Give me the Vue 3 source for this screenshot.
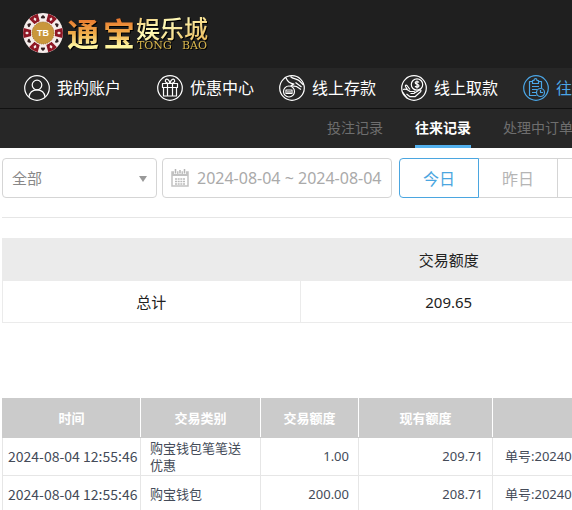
<script setup>
import { ref } from 'vue'

const menus = [
  { id: 'account', name: '我的账户' },
  { id: 'gift', name: '优惠中心' },
  { id: 'deposit', name: '线上存款' },
  { id: 'withdraw', name: '线上取款' },
  { id: 'history', name: '往来记录' },
]
const currentMenu = ref('history')

const tabs = ['投注记录', '往来记录', '处理中订单']
const currentTab = ref('往来记录')

const types = ['全部', '购宝钱包', '购宝钱包笔笔送优惠']
const selectedType = ref('全部')
const dateRange = ref('2024-08-04 ~ 2024-08-04')

const days = ['今日', '昨日', '近七日']
const currentDay = ref('今日')

const total = ref('209.65')
const records = ref([
  { time: '2024-08-04 12:55:46', type: '购宝钱包笔笔送优惠', amount: '1.00', balance: '209.71', note: '单号:20240804125546' },
  { time: '2024-08-04 12:55:46', type: '购宝钱包', amount: '200.00', balance: '208.71', note: '单号:20240804125546' },
])

const chipAngles = [0, 60, 120, 180, 240, 300]
</script>

<template>
  <div class="page">
    <header class="header">
      <svg class="logo" width="196" height="56" viewBox="0 0 196 56" role="img" aria-label="通宝娱乐城">
        <defs>
          <linearGradient id="gold" x1="0" y1="0" x2="0" y2="1">
            <stop offset="0.2" stop-color="#e8752c" />
            <stop offset="0.55" stop-color="#f0b04c" />
            <stop offset="0.8" stop-color="#fff5a0" />
          </linearGradient>
          <linearGradient id="pale" x1="0" y1="0" x2="1" y2="1">
            <stop offset="0" stop-color="#e8b055" />
            <stop offset="0.4" stop-color="#fffab8" />
            <stop offset="1" stop-color="#e9b04c" />
          </linearGradient>
        </defs>
        <circle cx="23" cy="27" r="20" fill="#f5ecea" />
        <g v-for="a in chipAngles" :key="a" :transform="`rotate(${a + 30} 23 27)`">
          <path d="M18 7.7a20 20 0 0 1 10 0l-2 7.600a12 12 0 0 0-6 0z" fill="#8e1624" />
          <path d="M23 9l1.500 2-1.500 2-1.500-2z" fill="#f5ecea" />
        </g>
        <g v-for="a in chipAngles" :key="'s' + a" :transform="`rotate(${a} 23 27)`">
          <path d="M23 9c3 2 2.500 4 0 3.200c-2.500.8-3-1.200 0-3.200z" fill="#332022" />
        </g>
        <circle cx="23" cy="27" r="12" fill="#f5ecea" />
        <circle cx="23" cy="27" r="11" fill="#c9973c" stroke="#9c6a25" stroke-dasharray="1 1" />
        <text x="23" y="30" class="chip-text">TB</text>
        <g class="logo-shadow">
          <text x="47" y="40" class="logo-big">通</text>
          <text x="83" y="40" class="logo-big">宝</text>
          <text x="116" y="32" class="logo-mid">娱乐城</text>
          <text x="117" y="43" class="logo-en">TONG</text>
          <text x="162" y="43" class="logo-en">BAO</text>
        </g>
      </svg>
    </header>

    <nav class="menu">
      <a
        v-for="menu in menus"
        :key="menu.id"
        href="#"
        class="menu-item"
        :class="{ active: currentMenu === menu.id }"
        @click.prevent="currentMenu = menu.id"
      >
        <svg class="menu-icon" width="26" height="26" viewBox="0 0 26 26" aria-hidden="true">
          <circle cx="13" cy="13" r="12.300" />
          <g v-if="menu.id === 'account'">
            <circle cx="13" cy="10" r="4.800" />
            <path d="M5 22c.5-4.500 3.500-7.200 8-7.200s7.500 2.700 8 7.200" />
          </g>
          <g v-else-if="menu.id === 'gift'">
            <path d="M5.500 8.500h15v4h-15zM6.500 12.500h13v8.500h-13zM10.500 8.500v12.500M15.500 8.500v12.500M13 8.500C10 8.500 7.500 7 8.500 5s4-.5 4.500 3.500C13.500 4.500 16.500 3 17.500 5S16 8.500 13 8.500z" />
          </g>
          <g v-else-if="menu.id === 'deposit'">
            <circle cx="10" cy="16.500" r="5.500" />
            <path d="M7 18.500v-3.500h6v3.500M9 18.500v-2.500M11 18.500v-2.500M6.500 18.500h7" />
            <path d="M7 3c1.500 3.500 4 5.500 8 6l-3 1.500c1.500 1.200 3.500.3 5.500 1l4.500 3M11.500 1.500c2.500 2.800 6.500 2 9 4.500l4 4M16.500 7.500l6 4.500" />
          </g>
          <g v-else-if="menu.id === 'withdraw'">
            <circle cx="16" cy="9.500" r="5.700" />
            <path d="M18 7.500c-.8-1.200-3.800-1.200-3.800.3 0 2 3.800 1 3.800 3 0 1.700-3 1.700-4 .4M16 5.500v8" />
            <path d="M2 14.500c3-1 5 0 7 2h4c1.500.5 1 2-.5 2H9.500M13.500 18l5-3c1.500-.4 2 .8 1 1.700l-5.500 5H9L5.500 19M9 14.500l-3-4c-1-1-2-.2-1.500 1l2.500 4M1.500 17l5 6.500" />
          </g>
          <g v-else>
            <path d="M13.500 20.500H6.500V6.500h3M15.500 6.500h3v6.500M9.500 8.500v-3h1.500c0-2.500 3-2.500 3 0h1.500v3zM9 11.500h7M9 14.500h5M9 17.500h4" />
            <circle cx="17.500" cy="17.500" r="4" />
            <path d="M17.500 15v2.500h2.500" />
          </g>
        </svg>
        <span>{{ menu.name }}</span>
      </a>
    </nav>

    <nav class="tabs">
      <a
        v-for="tab in tabs"
        :key="tab"
        href="#"
        class="tab"
        :class="{ active: currentTab === tab }"
        @click.prevent="currentTab = tab"
      >{{ tab }}</a>
    </nav>

    <main class="content">
      <div class="filters">
        <div class="select-box">
          <select v-model="selectedType" aria-label="交易类别">
            <option v-for="type in types" :key="type">{{ type }}</option>
          </select>
          <span class="arrow"></span>
        </div>
        <label class="date-box">
          <svg width="18" height="18" viewBox="0 0 18 18" aria-hidden="true">
            <path d="M1 3h16v14H1z" fill="#fff" stroke="#c2c2c2" stroke-width="1.500" />
            <path d="M1 3h16v4H1z" fill="#c2c2c2" />
            <path d="M4.500 0v5M9 1v4M13.500 0v5" stroke="#fff" stroke-width="3" />
            <path d="M4.500 0v4.500M9 1v3.500M13.500 0v4.500" stroke="#b5b5b5" stroke-width="1.500" />
            <path d="M4 10h10M4 12.500h10M4 15h10" stroke="#bbb" stroke-width="1.500" stroke-dasharray="2 .67" />
          </svg>
          <input v-model="dateRange" type="text" aria-label="日期" />
        </label>
        <div class="days">
          <button
            v-for="day in days"
            :key="day"
            type="button"
            :class="{ active: currentDay === day }"
            @click="currentDay = day"
          >{{ day }}</button>
        </div>
      </div>

      <table class="summary">
        <thead>
          <tr>
            <th></th>
            <th>交易额度</th>
          </tr>
        </thead>
        <tbody>
          <tr>
            <td>总计</td>
            <td>{{ total }}</td>
          </tr>
        </tbody>
      </table>

      <table class="records">
        <colgroup>
          <col class="col-time" />
          <col class="col-type" />
          <col class="col-amount" />
          <col class="col-balance" />
          <col class="col-note" />
        </colgroup>
        <thead>
          <tr>
            <th>时间</th>
            <th>交易类别</th>
            <th>交易额度</th>
            <th>现有额度</th>
            <th class="note-head">备注</th>
          </tr>
        </thead>
        <tbody>
          <tr v-for="(record, index) in records" :key="index">
            <td class="time">{{ record.time }}</td>
            <td>{{ record.type }}</td>
            <td class="number">{{ record.amount }}</td>
            <td class="number">{{ record.balance }}</td>
            <td class="note">{{ record.note }}</td>
          </tr>
        </tbody>
      </table>
    </main>
  </div>
</template>

<style>
body {
  margin: 0;
  background-color: #fff;
}
</style>

<style scoped>
.page {
  overflow: hidden;
  font-family: "Noto Sans", "Noto Sans CJK SC", sans-serif;
}
.header {
  height: 68px;
  padding-left: 20px;
  background-color: #1f1f1f;
}
.logo {
  display: block;
  padding-top: 6px;
}
.chip-text {
  font: bold 9px "Liberation Sans", sans-serif;
  fill: #fff;
  text-anchor: middle;
}
.logo-shadow {
  filter: drop-shadow(1px 1px 0 #000);
}
.logo-big {
  font: bold 32px "Noto Sans CJK SC", sans-serif;
  fill: url(#gold);
}
.logo-mid {
  font: 500 24px "Noto Sans CJK SC", sans-serif;
  fill: url(#pale);
}
.logo-en {
  font: 11px "DejaVu Serif", serif;
  fill: #d9b64c;
}
.menu {
  display: flex;
  align-items: center;
  gap: 25px;
  height: 40px;
  padding-left: 24px;
  background-color: #272727;
  border-bottom: 1px solid #111;
}
.menu-item {
  display: flex;
  flex: none;
  align-items: center;
  gap: 7px;
  color: #fff;
  font-size: 16px;
  line-height: 24px;
  text-decoration: none;
}
.menu-item:first-child {
  margin-right: 11px;
}
.menu-item.active {
  color: #4ba6e6;
}
.menu-icon {
  fill: none;
  stroke: currentColor;
  stroke-width: 1.2;
  stroke-linejoin: round;
}
.tabs {
  display: flex;
  gap: 32px;
  height: 39px;
  padding-left: 327px;
  background-color: #272727;
}
.tab {
  box-sizing: border-box;
  flex: none;
  border-bottom: 3px solid transparent;
  color: #6e6e6e;
  font-size: 14px;
  line-height: 38px;
  text-decoration: none;
}
.tab.active {
  border-color: #53b1ee;
  color: #fff;
  font-weight: bold;
}
.content {
  padding-left: 2px;
}
.filters {
  display: flex;
  padding: 10px 0 19px;
  border-bottom: 1px solid #e6e6e6;
}
.select-box {
  position: relative;
  flex: none;
  width: 155px;
  margin-right: 5px;
}
.select-box select {
  box-sizing: border-box;
  width: 100%;
  height: 40px;
  padding: 0 9px;
  appearance: none;
  border: 1px solid #d5d5d5;
  border-radius: 4px;
  background-color: #fff;
  color: #888;
  font-family: inherit;
  font-size: 15px;
}
.arrow {
  position: absolute;
  top: 18px;
  right: 10px;
  border: 4px solid transparent;
  border-top: 6px solid #999;
  border-bottom: 0;
  pointer-events: none;
}
.date-box {
  box-sizing: border-box;
  display: flex;
  flex: none;
  align-items: center;
  gap: 8px;
  width: 230px;
  height: 40px;
  margin-right: 7px;
  padding-left: 8px;
  border: 1px solid #d5d5d5;
  border-radius: 4px;
}
.date-box input {
  flex: 1;
  min-width: 0;
  padding: 0;
  border: none;
  outline: none;
  color: #aaa;
  font-family: inherit;
  font-size: 16px;
}
.days {
  display: flex;
  flex: none;
}
.days button {
  box-sizing: border-box;
  width: 80px;
  height: 40px;
  margin-right: -1px;
  padding: 0;
  border: 1px solid #d5d5d5;
  background-color: #fff;
  color: #b5b5b5;
  font-family: inherit;
  font-size: 16px;
  cursor: pointer;
}
.days button:first-child {
  border-radius: 4px 0 0 4px;
}
.days button.active {
  z-index: 1;
  border-color: #4ba6e0;
  color: #4ba6e0;
}
table {
  border-collapse: collapse;
  table-layout: fixed;
}
.summary {
  width: 596px;
  margin-top: 20px;
  color: #222;
  font-size: 15px;
  line-height: 24px;
  text-align: center;
}
.summary th {
  height: 41px;
  padding: 0;
  border: 1px solid #ebebeb;
  background-color: #ebebeb;
  font-weight: normal;
}
.summary td {
  height: 41px;
  padding: 0;
  border: 1px solid #ebebeb;
}
.records {
  width: 784px;
  margin-top: 75px;
  color: #444b58;
  font-size: 13px;
  line-height: 17px;
}
.col-time {
  width: 138px;
}
.col-type {
  width: 120px;
}
.col-amount {
  width: 98px;
}
.col-balance {
  width: 134px;
}
.records th {
  height: 38px;
  padding: 0;
  border: 1px solid #cbcbcb;
  border-right-color: #fff;
  background-color: #cbcbcb;
  color: #fff;
}
.records .note-head {
  border-right: none;
}
.records td {
  height: 37px;
  padding: 0 9px;
  border: 1px solid #e6e6e6;
}
.records .time {
  padding: 0 0 0 5px;
  font-family: "Noto Sans CJK SC", sans-serif;
  font-size: 14px;
  white-space: nowrap;
}
.records .number {
  text-align: right;
}
.records .note {
  padding-left: 12px;
}
</style>
